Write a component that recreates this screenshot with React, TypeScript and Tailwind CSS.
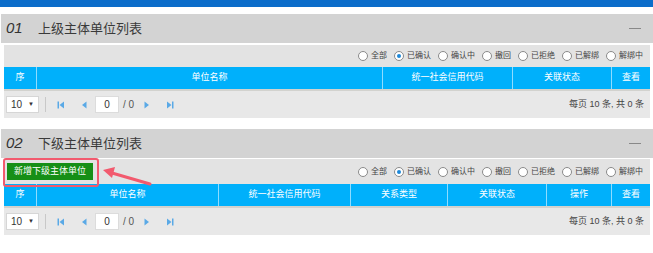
import { useState } from "react";

const radios = ["全部", "已确认", "确认中", "撤回", "已拒绝", "已解绑", "解绑中"];

type Col = { label: string; w: string };

const cols1: Col[] = [
	{ label: "序", w: "w-[33px]" },
	{ label: "单位名称", w: "w-[346px]" },
	{ label: "统一社会信用代码", w: "w-[130px]" },
	{ label: "关联状态", w: "w-[99px]" },
	{ label: "查看", w: "flex-1" },
];

const cols2: Col[] = [
	{ label: "序", w: "w-[33px]" },
	{ label: "单位名称", w: "w-[182px]" },
	{ label: "统一社会信用代码", w: "w-[132px]" },
	{ label: "关系类型", w: "w-[97px]" },
	{ label: "关联状态", w: "w-[99px]" },
	{ label: "操作", w: "w-[65px]" },
	{ label: "查看", w: "flex-1" },
];

const RadioGroup = () => {
	const [value, setValue] = useState("已确认");
	return (
		<div className="flex items-center gap-[7px] pr-[7px]">
			{radios.map((r) => (
				<label
					key={r}
					className="flex items-center gap-[3px] text-[8px] text-[#444] cursor-pointer"
					onClick={() => setValue(r)}
				>
					<span className="w-[10px] h-[10px] rounded-full border border-[#8a8a8a] bg-white flex items-center justify-center">
						{value === r && <span className="w-[4px] h-[4px] rounded-full bg-[#1e88d8]" />}
					</span>
					{r}
				</label>
			))}
		</div>
	);
};

const Pager = () => (
	<div className="h-[27px] bg-[#e8e8e8] flex items-center justify-between pl-[2px] pr-[6px] text-[9px] text-[#444]">
		<div className="flex items-center">
			<div className="w-[33px] h-[17px] bg-white border border-[#d6d6d6] flex items-center justify-between px-[4px] text-[10px] text-[#333]">
				<span>10</span>
				<span className="text-[6px]">▼</span>
			</div>
			<span className="w-px h-[15px] bg-[#c8c8c8] ml-[6px]" />
			<svg width="8" height="8" viewBox="0 0 8 8" className="ml-[11px]">
				<rect x="0.5" y="0.5" width="1.5" height="7" fill="#5aa9e6" />
				<path d="M7 0.5 L2.5 4 L7 7.5 Z" fill="#5aa9e6" />
			</svg>
			<svg width="6" height="8" viewBox="0 0 6 8" className="ml-[16px]">
				<path d="M5.5 0.5 L1 4 L5.5 7.5 Z" fill="#5aa9e6" />
			</svg>
			<div className="ml-[8px] w-[24px] h-[17px] bg-white border border-[#dcdcdc] flex items-center justify-center text-[10px] text-[#333]">
				0
			</div>
			<span className="ml-[4px] text-[10px] text-[#555]">/ 0</span>
			<svg width="6" height="8" viewBox="0 0 6 8" className="ml-[10px]">
				<path d="M0.5 0.5 L5 4 L0.5 7.5 Z" fill="#5aa9e6" />
			</svg>
			<svg width="8" height="8" viewBox="0 0 8 8" className="ml-[16px]">
				<path d="M1 0.5 L5.5 4 L1 7.5 Z" fill="#5aa9e6" />
				<rect x="6" y="0.5" width="1.5" height="7" fill="#5aa9e6" />
			</svg>
		</div>
		<span>每页 10 条, 共 0 条</span>
	</div>
);

const TableHead = ({ cols }: { cols: Col[] }) => (
	<div className="h-[22px] bg-[#00b0fb] flex border-b-2 border-[#d2d2ce] box-content">
		{cols.map((c, i) => (
			<div
				key={c.label}
				className={`${c.w} flex items-center justify-center text-[9px] text-white ${
					i < cols.length - 1 ? "border-r border-[#8fdcff]" : ""
				}`}
			>
				{c.label}
			</div>
		))}
	</div>
);

const Header = ({ num, title }: { num: string; title: string }) => (
	<div className="h-[29px] ml-[1px] bg-[#d3d3d3] flex items-center pl-[5px] pr-[12px]">
		<span className="italic text-[15px] text-[#333] w-[32px]" style={{ fontFamily: '"Liberation Sans", sans-serif' }}>
			{num}
		</span>
		<span className="text-[13px] text-[#3a3a3a]">{title}</span>
		<span className="ml-auto w-[12px] h-px bg-[#888]" />
	</div>
);

export default function App() {
	return (
		<div
			className="w-[653px] h-[253px] bg-white overflow-hidden"
			style={{ fontFamily: '"Liberation Sans", "Noto Sans CJK SC", sans-serif' }}
		>
			<div className="h-[7px] bg-[#0b6dca]" />
			<div className="pt-[7px]">
				<Header num="01" title="上级主体单位列表" />
				<div className="mt-[2px] mx-[4px] mr-[3px]">
					<div className="h-[22px] bg-[#e3e3e3] flex items-center justify-end">
						<RadioGroup />
					</div>
					<TableHead cols={cols1} />
					<Pager />
				</div>

				<div className="mt-[11px]">
					<Header num="02" title="下级主体单位列表" />
				</div>
				<div className="mt-[1px] mx-[4px] mr-[3px] relative">
					<div className="h-[25px] bg-[#e3e3e3] flex items-center justify-between pl-[3px]">
						<button className="h-[17px] w-[86px] bg-[#168f16] text-white text-[9px] flex items-center justify-center">
							新增下级主体单位
						</button>
						<RadioGroup />
					</div>
					<TableHead cols={cols2} />
					<Pager />
					<div className="absolute left-[-1px] top-[-1px] w-[96px] h-[29px] border-2 border-[#f25a6e] rounded-[3px]" />
					<svg
						className="absolute left-[96px] top-[6px]"
						width="54"
						height="24"
						viewBox="0 0 54 24"
					>
						<line x1="50" y1="19" x2="12" y2="8" stroke="#f25a6e" strokeWidth="3" strokeLinecap="round" />
						<path d="M3 5 L15 2 L12 13 Z" fill="#f25a6e" />
					</svg>
				</div>
			</div>
		</div>
	);
}
